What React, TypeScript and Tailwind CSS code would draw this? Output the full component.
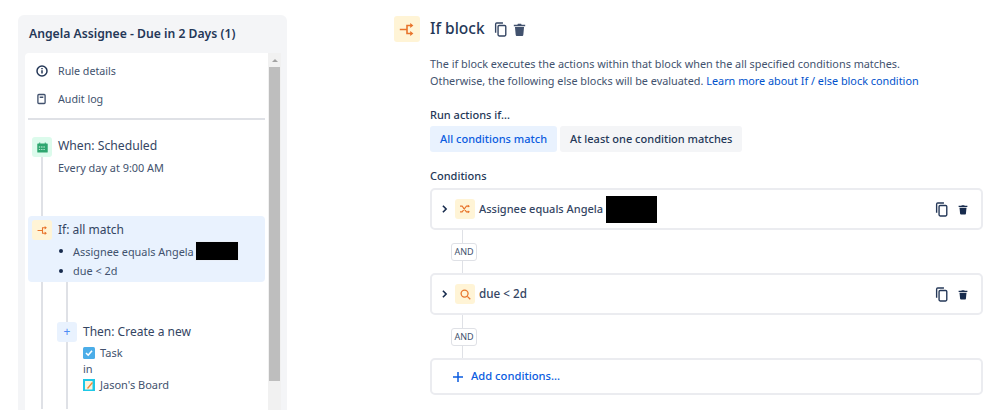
const FONT = "font-['Noto_Sans','Open_Sans',sans-serif]";

function CopyIcon({ className }: { className?: string }) {
  return (
    <svg viewBox="0 0 16 18" className={className} fill="none" stroke="currentColor" strokeWidth="1.7">
      <path d="M2 13V2.5C2 1.7 2.6 1 3.4 1H11" />
      <rect x="5" y="4" width="9.5" height="13" rx="1.4" />
    </svg>
  );
}

function TrashIcon({ className }: { className?: string }) {
  return (
    <svg viewBox="0 0 16 16" className={className} fill="currentColor">
      <path d="M6 1h4l.6 1H15v2H1V2h4.4L6 1z" />
      <path d="M2.4 5h11.2l-.9 9.4c-.1.9-.7 1.6-1.6 1.6H4.9c-.9 0-1.5-.7-1.6-1.6L2.4 5z" />
    </svg>
  );
}

function BranchIcon({ className }: { className?: string }) {
  return (
    <svg viewBox="0 0 20 16" className={className} fill="none" stroke="currentColor" strokeWidth="2">
      <path d="M1 8h9M10 8V3h6M10 8v5h6" />
      <path d="M14 0 18 3l-4 3zM14 10l4 3-4 3z" fill="currentColor" stroke="none" />
    </svg>
  );
}

function ShuffleIcon({ className }: { className?: string }) {
  return (
    <svg viewBox="0 0 16 14" className={className} fill="none" stroke="currentColor" strokeWidth="1.5">
      <path d="M1 3h3l6 8h3M1 11h3l6-8h3" />
      <path d="M12 1l3 2-3 2zM12 9l3 2-3 2z" fill="currentColor" stroke="none" />
    </svg>
  );
}

function AndBadge() {
  return (
    <div className="ml-[21px] flex flex-col items-start">
      <div className="ml-[11px] h-[13px] w-px bg-[#dfe1e6]" />
      <div className="flex h-[18px] w-[26px] items-center justify-center rounded-[3px] border border-[#dfe1e6] bg-white text-[9px] text-[#42526e]">
        AND
      </div>
      <div className="ml-[11px] h-[12px] w-px bg-[#dfe1e6]" />
    </div>
  );
}

function ConditionRow({ icon, children }: { icon: React.ReactNode; children: React.ReactNode }) {
  return (
    <div className="flex h-[42px] w-[553px] items-center rounded-[5px] border-2 border-[#ebecf0] bg-white pr-[13px] pl-[9px]">
      <svg viewBox="0 0 8 10" className="h-[8px] w-[7px] text-[#172b4d]" fill="none" stroke="currentColor" strokeWidth="2">
        <path d="M2 1l4 4-4 4" />
      </svg>
      <div className="ml-[7px] flex h-[20px] w-[20px] items-center justify-center rounded-[3px] bg-[#fff4d6] text-[#e8742c]">
        {icon}
      </div>
      <div className="ml-[4px] flex flex-1 items-center font-medium text-[#344563]">{children}</div>
      <CopyIcon className="h-[15px] w-[13px] text-[#253858]" />
      <TrashIcon className="ml-[10px] h-[11px] w-[10px] text-[#172b4d]" />
    </div>
  );
}

function Sidebar() {
  return (
    <aside className="mt-[15px] ml-[18px] h-[395px] w-[269px] shrink-0 overflow-hidden rounded-t-[6px] bg-[#f4f5f7] pl-[7px]">
      <h2 className="flex h-[38px] items-center pl-[4px] text-[12.2px] font-semibold text-[#253858]">
        Angela Assignee - Due in 2 Days (1)
      </h2>
      <div className="flex h-[357px]">
        <div className="h-full w-[243px] overflow-hidden rounded-tl-[4px] bg-white text-[#42526e]">
          <div className="mx-[3px] border-b-2 border-[#dfe1e6] pt-[8px] pb-[9px]">
            <div className="flex h-[20px] items-center pl-[8px] text-[10.7px]">
              <svg viewBox="0 0 12 12" className="h-[12px] w-[12px] text-[#253858]" fill="none" stroke="currentColor" strokeWidth="1.5">
                <circle cx="6" cy="6" r="5" />
                <path d="M6 5.2v3.4M6 3v1.3" />
              </svg>
              <span className="ml-[10px]">Rule details</span>
            </div>
            <div className="mt-[8px] flex h-[20px] items-center pl-[9px] text-[10.7px]">
              <svg viewBox="0 0 10 12" className="h-[12px] w-[9px] text-[#42526e]" fill="none" stroke="currentColor" strokeWidth="1.5">
                <rect x="1" y="1" width="8" height="10" rx="1" />
                <path d="M3 4h4" />
              </svg>
              <span className="ml-[12px]">Audit log</span>
            </div>
          </div>

          <div className="flex h-[96px] pl-[7px]">
            <div className="mt-[17px] flex w-[20px] flex-col items-center">
              <div className="flex h-[20px] w-[20px] shrink-0 items-center justify-center rounded-[3px] bg-[#dcfbec]">
                <svg viewBox="0 0 12 12" className="h-[11px] w-[11px] text-[#2ea66f]" fill="currentColor">
                  <path d="M2.5 0.5h1v1h5v-1h1v1H11c.4 0 .7.3.7.7v8.6c0 .4-.3.7-.7.7H1c-.4 0-.7-.3-.7-.7V2.2c0-.4.3-.7.7-.7h1.5z" />
                  <path d="M2 5h1.5v1H2zM4.5 5H6v1H4.5zM7 5h1.5v1H7zM2 7.5h1.5v1H2zM4.5 7.5H6v1H4.5zM7 7.5h1.5v1H7z" fill="#dcfbec" />
                </svg>
              </div>
              <div className="w-[2px] flex-1 bg-[#dfe1e6]" />
            </div>
            <div className="mt-[17px] ml-[6px]">
              <div className="text-[12.2px] leading-[18px] text-[#344563]">When: Scheduled</div>
              <div className="mt-[5px] text-[10.9px] leading-[15px]">Every day at 9:00 AM</div>
            </div>
          </div>

          <div className="mx-[3px] h-[66px] rounded-[4px] bg-[#e9f2fe] pt-[4px] pl-[4px]">
            <div className="flex items-center">
              <div className="flex h-[20px] w-[20px] items-center justify-center rounded-[3px] bg-[#fff4d6] text-[#e8742c]">
                <BranchIcon className="h-[9px] w-[11px]" />
              </div>
              <span className="ml-[6px] text-[12px] text-[#344563]">If: all match</span>
            </div>
            <ul className="mt-[1px] ml-[27px] text-[10.9px] leading-[19px]">
              <li className="flex items-center">
                <span className="mr-[10px] h-[4px] w-[4px] rounded-full bg-[#172b4d]" />
                Assignee equals Angela
                <span className="ml-[1px] h-[20px] w-[44px] border border-[#e8eef7] bg-black" />
              </li>
              <li className="flex items-center">
                <span className="mr-[10px] h-[4px] w-[4px] rounded-full bg-[#172b4d]" />
                due &lt; 2d
              </li>
            </ul>
          </div>

          <div className="flex h-[127px] pl-[16px]">
            <div className="h-full w-[2px] bg-[#dfe1e6]" />
            <div className="ml-[14px] flex w-[20px] flex-col items-center">
              <div className="h-[40px] w-[2px] bg-[#dfe1e6]" />
              <div className="flex h-[20px] w-[20px] shrink-0 items-center justify-center rounded-[3px] bg-[#e9f2fe] text-[12px] leading-none text-[#4c8cf5]">
                +
              </div>
              <div className="w-[2px] flex-1 bg-[#dfe1e6]" />
            </div>
            <div className="ml-[6px] pt-[40px]">
              <div className="text-[12px] leading-[20px] text-[#344563]">Then: Create a new</div>
              <div className="mt-[3px] flex items-center text-[11px] leading-[15px]">
                <svg viewBox="0 0 12 12" className="mr-[5px] h-[12px] w-[12px]">
                  <rect width="12" height="12" rx="1.5" fill="#4bade8" />
                  <path d="M3 6l2.2 2.2L9 3.8" fill="none" stroke="#fff" strokeWidth="1.6" />
                </svg>
                Task
              </div>
              <div className="mt-[1px] text-[11px] leading-[15px]">in</div>
              <div className="mt-[1px] flex items-center text-[11px] leading-[15px]">
                <svg viewBox="0 0 12 12" className="mr-[5px] h-[12px] w-[12px]">
                  <rect width="12" height="12" fill="#1ec8e6" />
                  <rect x="2" y="2" width="7.5" height="8.5" fill="#fdf3dc" />
                  <path d="M4 9l5-6 1 1-5 6z" fill="#f08a3c" />
                </svg>
                Jason's Board
              </div>
            </div>
          </div>
        </div>

        {/* Scrollbar */}
        <div className="flex h-full w-[13px] flex-col items-center bg-[#f1f1f1]">
          <div className="flex h-[14px] items-center">
            <div className="h-0 w-0 border-x-[3px] border-b-[3px] border-x-transparent border-b-[#a3a3a3]" />
          </div>
          <div className="h-[314px] w-[11px] bg-[#bebebe]" />
        </div>
      </div>
    </aside>
  );
}

function Detail() {
  return (
    <main className="ml-[107px] pt-[16px]">
      <div className="flex items-center">
        <div className="flex h-[26px] w-[26px] items-center justify-center rounded-[3px] bg-[#fff4d6] text-[#e8742c]">
          <BranchIcon className="h-[13px] w-[16px]" />
        </div>
        <h1 className="ml-[10px] text-[15.5px] font-medium text-[#253858]">If block</h1>
        <CopyIcon className="ml-[9px] h-[15px] w-[13px] text-[#344563]" />
        <TrashIcon className="ml-[6px] h-[13px] w-[13px] text-[#42526e]" />
      </div>

      <div className="mt-[13px] pl-[36px]">
        <p className="text-[10.85px] leading-[17px] text-[#42526e]">
          The if block executes the actions within that block when the all specified conditions matches.
          <br />
          Otherwise, the following else blocks will be evaluated. <span className="text-[#0052cc]">Learn more about If / else block condition</span>
        </p>
        <div className="mt-[17px] text-[11px] font-medium leading-[17px] text-[#253858]">Run actions if...</div>
        <div className="mt-[3px] flex gap-[3px] text-[11px] font-medium">
          <div className="flex h-[26px] items-center rounded-[3px] bg-[#e9f2fe] px-[10px] text-[#0b5ce0]">All conditions match</div>
          <div className="flex h-[26px] items-center rounded-[3px] bg-[#f4f5f7] px-[10px] text-[#253858]">At least one condition matches</div>
        </div>

        <div className="mt-[15px] text-[11px] font-medium leading-[17px] text-[#253858]">Conditions</div>
        <div className="mt-[4px]">
          <ConditionRow icon={<ShuffleIcon className="h-[10px] w-[12px]" />}>
            <span className="text-[11px]">Assignee equals Angela</span>
            <span className="ml-[3px] h-[27px] w-[51px] bg-black" />
          </ConditionRow>
          <AndBadge />
          <ConditionRow
            icon={
              <svg viewBox="0 0 12 12" className="h-[11px] w-[11px]" fill="none" stroke="currentColor" strokeWidth="1.4">
                <circle cx="5" cy="5" r="3.8" />
                <path d="M8 8l3.2 3.2" />
              </svg>
            }
          >
            <span className="text-[11.7px]">due &lt; 2d</span>
          </ConditionRow>
          <AndBadge />
          <div className="flex h-[37px] w-[553px] items-center rounded-[5px] border-2 border-[#ebecf0] bg-white pl-[21px] text-[11.2px] font-medium text-[#0b5ce0]">
            <svg viewBox="0 0 10 10" className="mr-[8px] h-[10px] w-[10px]" fill="none" stroke="currentColor" strokeWidth="1.5">
              <path d="M5 0v10M0 5h10" />
            </svg>
            Add conditions...
          </div>
        </div>
      </div>
    </main>
  );
}

export default function App() {
  return (
    <div className={`flex h-[410px] w-[998px] overflow-hidden bg-white ${FONT}`}>
      <Sidebar />
      <Detail />
    </div>
  );
}
